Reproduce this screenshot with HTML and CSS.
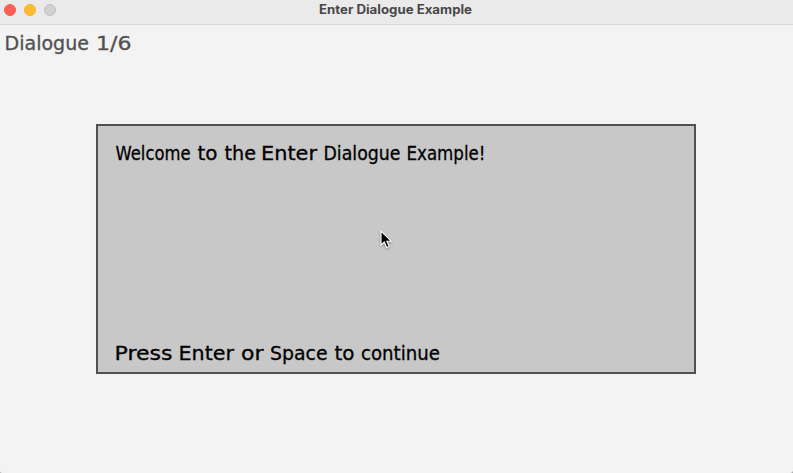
FILE: index.html
```
<!DOCTYPE html>
<html lang="en">
<head>
<meta charset="utf-8">
<title>Enter Dialogue Example</title>
<link rel="stylesheet" href="styles.css">
</head>
<body>
<div class="window">
  <header class="titlebar">
    <div class="controls"><i class="dot close"></i><i class="dot minimize"></i><i class="dot disabled"></i></div>
    <svg class="title" width="156" height="24"><text x="1" y="14" textLength="153" lengthAdjust="spacingAndGlyphs">Enter Dialogue Example</text></svg>
  </header>
  <main class="canvas">
    <svg class="line counter" width="140" height="24">
      <text x="4.5" y="18" textLength="84.5" lengthAdjust="spacingAndGlyphs">Dialogue</text>
      <text x="96" y="18" textLength="35.5" lengthAdjust="spacingAndGlyphs">1/6</text>
    </svg>
    <section class="dialogue">
      <svg class="line" width="400" height="24">
        <text x="0.5" y="18" textLength="75" lengthAdjust="spacingAndGlyphs">Welcome</text>
        <text x="82.5" y="18" textLength="20" lengthAdjust="spacingAndGlyphs">to</text>
        <text x="109.5" y="18" textLength="31.5" lengthAdjust="spacingAndGlyphs">the</text>
        <text x="146" y="18" textLength="56" lengthAdjust="spacingAndGlyphs">Enter</text>
        <text x="208.5" y="18" textLength="77" lengthAdjust="spacingAndGlyphs">Dialogue</text>
        <text x="291.5" y="18" textLength="79" lengthAdjust="spacingAndGlyphs">Example!</text>
      </svg>
      <svg class="line" width="400" height="24">
        <text x="-0.5" y="18" textLength="58" lengthAdjust="spacingAndGlyphs">Press</text>
        <text x="63.5" y="18" textLength="55.5" lengthAdjust="spacingAndGlyphs">Enter</text>
        <text x="126" y="18" textLength="22.5" lengthAdjust="spacingAndGlyphs">or</text>
        <text x="155" y="18" textLength="57.5" lengthAdjust="spacingAndGlyphs">Space</text>
        <text x="219.5" y="18" textLength="20" lengthAdjust="spacingAndGlyphs">to</text>
        <text x="246" y="18" textLength="79" lengthAdjust="spacingAndGlyphs">continue</text>
      </svg>
    </section>
    <svg class="cursor" width="13" height="20" viewBox="0 0 13 20">
      <path d="M1 1V15L4.3 12L6.7 17.5L9.2 16.4L6.9 11.2H11.2Z"/>
    </svg>
  </main>
</div>
</body>
</html>
```
FILE: styles.css
```
* { box-sizing: border-box; }
body { margin: 0; background: #a6a6a6; overflow: hidden; }
.window {
  position: relative;
  display: flex;
  flex-direction: column;
  width: 793px;
  height: 473px;
  background: #f3f3f3;
  border-radius: 0 0 3px 2px;
  overflow: hidden;
}
.titlebar {
  display: grid;
  grid-template-columns: 318px 1fr;
  height: 25px;
  background: #eaeaea;
  border-bottom: 1px solid #d8d8d8;
}
.controls { display: flex; gap: 8px; padding: 4px; }
.dot { width: 12px; height: 12px; border-radius: 50%; border: 1px solid; }
.close { background: #ff5f57; border-color: #f45c54; }
.minimize { background: #febc2e; border-color: #f3b32d; }
.disabled { background: #d1d1d1; border-color: #c1c1c1; }
svg { display: block; overflow: visible; }
.title text { font: 700 12.5px Inter, sans-serif; fill: #484848; }
.canvas { flex: 1; padding-top: 7px; }
.line text { font: 19.2px "DejaVu Sans", sans-serif; fill: #000; stroke: #000; stroke-width: .3px; }
.counter text { fill: #505050; stroke: #505050; }
.dialogue {
  display: flex;
  flex-direction: column;
  justify-content: space-between;
  width: 600px;
  height: 250px;
  margin: 68px 0 0 96px;
  padding: 16px 16px 6px 17px;
  background: #c8c8c8;
  border: 2px solid #505050;
}
.cursor { position: absolute; left: 380px; top: 230px; filter: drop-shadow(0 1px 1px #0005); }
.cursor path { fill: #000; stroke: #fff; stroke-width: 1.1; }
```
